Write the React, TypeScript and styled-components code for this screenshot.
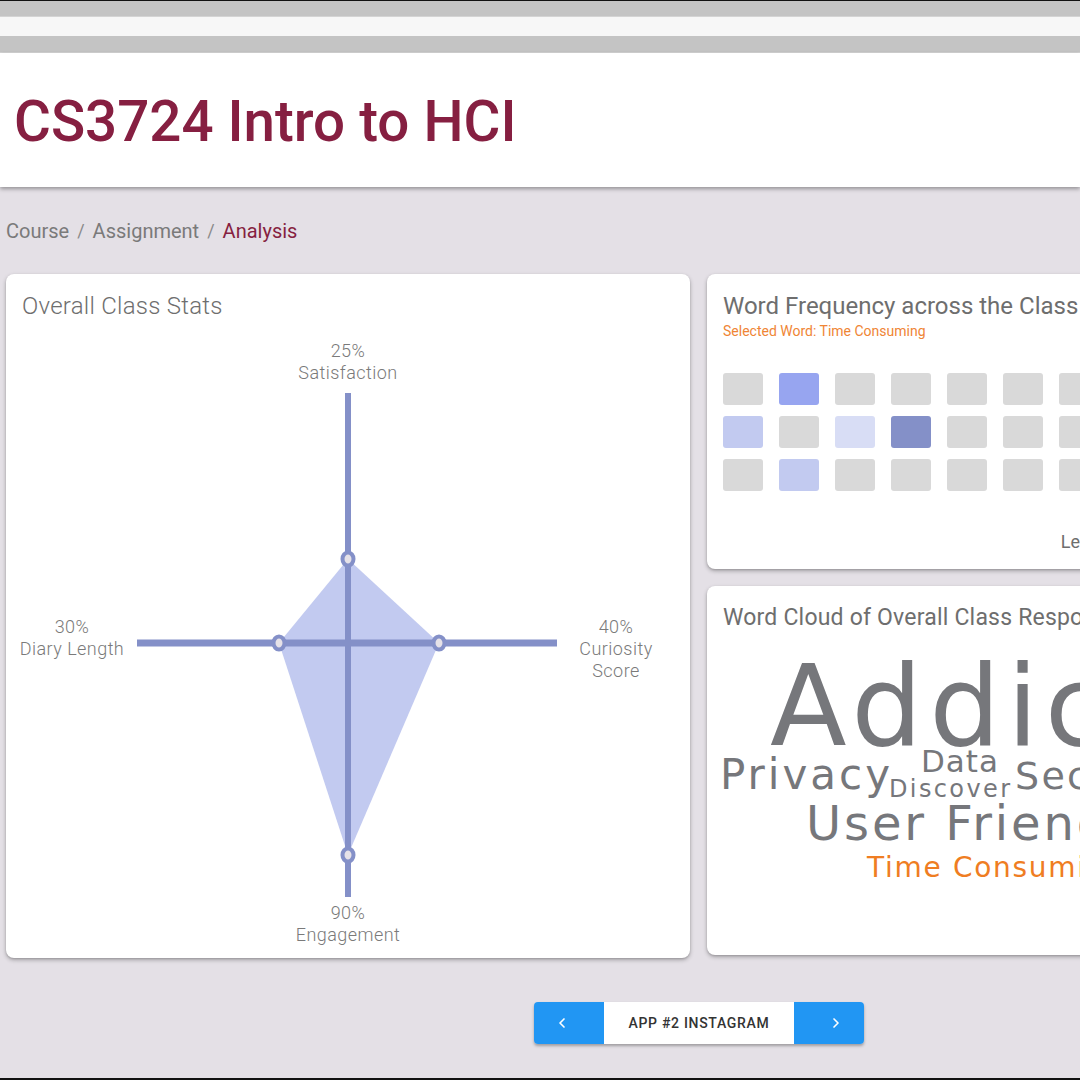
import React from "react";
import styled, { createGlobalStyle } from "styled-components";
import { ChevronLeft, ChevronRight } from "lucide-react";

const GlobalStyle = createGlobalStyle`
  html, body { margin: 0; padding: 0; overflow: hidden; background: #e4e0e6; }
  body { font-family: Roboto, "Liberation Sans", sans-serif; }
  * { box-sizing: border-box; }
`;

const Page = styled.div`
  width: 100vw;
  height: 1080px;
  overflow: hidden;
  background: #e4e0e6;
  border-top: 1px solid #111;
  border-bottom: 2px solid #111;
  display: flex;
  flex-direction: column;
`;

const ChromeBar = styled.div<{ $light?: boolean; $h: number }>`
  flex: none;
  height: ${(p) => p.$h}px;
  background: ${(p) => (p.$light ? "#f7f7f7" : "#c4c4c4")};
  border-bottom: ${(p) => (p.$light ? "none" : "1px solid #d4d4d4")};
`;

const Header = styled.header`
  flex: none;
  height: 134px;
  background: #fff;
  padding: 41px 14px 0;
  box-shadow: 0 2px 4px rgba(0, 0, 0, 0.35);
  position: relative;
  z-index: 1;
`;

const Title = styled.h1`
  margin: 0;
  font-family: Roboto, sans-serif;
  font-weight: 500;
  font-size: 56.5px;
  line-height: 56px;
  color: #861f41;
  white-space: nowrap;
`;

const Main = styled.main`
  width: 1398px;
  padding: 0 6px;
  flex: none;
`;

const Crumbs = styled.nav`
  display: flex;
  align-items: center;
  margin-top: 32px;
  height: 24px;
  font-size: 20px;
  line-height: 24px;
  color: #7a7a7a;
`;

const Crumb = styled.span<{ $active?: boolean }>`
  color: ${(p) => (p.$active ? "#861f41" : "#7a7a7a")};
`;

const Sep = styled.span`
  margin: 0 8px;
  color: #8a8a8a;
  font-size: 18px;
`;

const Grid = styled.div`
  display: grid;
  grid-template-columns: 684px 685px;
  column-gap: 17px;
  margin-top: 31px;
`;

const Card = styled.section<{ $h: number }>`
  background: #fff;
  border-radius: 8px;
  height: ${(p) => p.$h}px;
  box-shadow: 0 2px 4px rgba(0, 0, 0, 0.28), 0 1px 2px rgba(0, 0, 0, 0.12);
  overflow: hidden;
  display: flex;
  flex-direction: column;
`;

const Column = styled.div`
  display: flex;
  flex-direction: column;
  gap: 17px;
`;

const CardHead = styled.div<{ $top?: number }>`
  padding: ${(p) => p.$top ?? 16}px 16px 0;
`;

const CardTitle = styled.h2<{ $size?: number; $weight?: number; $ls?: number }>`
  margin: 0;
  font-family: Roboto, sans-serif;
  font-weight: ${(p) => p.$weight ?? 400};
  font-size: ${(p) => p.$size ?? 24}px;
  line-height: ${(p) => (p.$size ? p.$size + 8 : 32)}px;
  letter-spacing: ${(p) => p.$ls ?? 0}px;
  color: #6e6e6e;
  white-space: nowrap;
`;

const Selected = styled.div`
  font-size: 14px;
  line-height: 18px;
  color: #ef8535;
  white-space: nowrap;
`;

const Heat = styled.div`
  display: grid;
  grid-template-columns: repeat(12, 40px);
  grid-auto-rows: 32px;
  column-gap: 16px;
  row-gap: 11px;
  padding: 33px 16px 0;
`;

const Cell = styled.div<{ $c: string }>`
  background: ${(p) => p.$c};
  border-radius: 3px;
`;

const Legend = styled.div`
  display: flex;
  align-items: center;
  justify-content: flex-end;
  gap: 10px;
  padding: 0 16px;
  margin-top: 38px;
  height: 24px;
  font-size: 18px;
  color: #6e6e6e;
`;

const Swatches = styled.div`
  display: flex;
  gap: 4px;
`;

const Swatch = styled.div<{ $c: string }>`
  width: 40px;
  height: 20px;
  border-radius: 3px;
  background: ${(p) => p.$c};
`;

const ChartSvg = styled.svg`
  display: block;
  flex: none;
`;

const ChartSvgWrap = styled.div`
  margin-top: -3px;
`;

const PagerRow = styled.div`
  display: flex;
  justify-content: center;
  margin-top: 44px;
`;

const Pager = styled.div`
  display: flex;
  height: 42px;
  border-radius: 4px;
  overflow: hidden;
  box-shadow: 0 2px 3px rgba(0, 0, 0, 0.3);
`;

const NavBtn = styled.button<{ $side: "left" | "right" }>`
  width: 70px;
  border: none;
  background: #2196f3;
  color: #fff;
  display: flex;
  align-items: center;
  justify-content: center;
  padding: ${(p) => (p.$side === "left" ? "0 14px 0 0" : "0 0 0 14px")};
  cursor: pointer;
`;

const Label = styled.div`
  width: 190px;
  background: #fff;
  display: flex;
  align-items: center;
  justify-content: center;
  font-family: Roboto, sans-serif;
  font-weight: 500;
  font-size: 14px;
  letter-spacing: 0.7px;
  color: #333;
  text-transform: uppercase;
`;

const G = "#d9d9d9";
const heat: string[][] = [
  [G, "#97a5f0", G, G, G, G, G, G, G, G, G, G],
  ["#c2caf0", G, "#d8ddf5", "#8490c8", G, G, G, G, G, G, G, G],
  [G, "#c2caf0", G, G, G, G, G, G, G, G, G, G],
];

const AX = "#8490c8";
const LBL = {
  fill: "#7a7a7a",
  fontSize: 18,
  fontWeight: 300,
  fontFamily: "Roboto, sans-serif",
  letterSpacing: "0.45px",
} as const;

function Radar() {
  const cx = 342;
  const cy = 321;
  const pts = [
    [342, 237],
    [433, 321],
    [342, 533],
    [273, 321],
  ];
  return (
    <ChartSvg width={684} height={636} viewBox="0 0 684 636">
      <polygon points={pts.map((p) => p.join(",")).join(" ")} fill="#c2caf0" />
      <line x1={cx} y1={71} x2={cx} y2={575} stroke={AX} strokeWidth={6} />
      <line x1={131} y1={cy} x2={551} y2={cy} stroke={AX} strokeWidth={7} />
      {pts.map(([x, y], i) => (
        <ellipse key={i} cx={x} cy={y} rx={5.5} ry={6.5} fill="#e6e2e8" stroke={AX} strokeWidth={4} />
      ))}
      <g textAnchor="middle" {...LBL}>
        <text x={342} y={35}>25%</text>
        <text x={342} y={57}>Satisfaction</text>
        <text x={66} y={311}>30%</text>
        <text x={66} y={333}>Diary Length</text>
        <text x={610} y={311}>40%</text>
        <text x={610} y={333}>Curiosity</text>
        <text x={610} y={355}>Score</text>
        <text x={342} y={597}>90%</text>
        <text x={342} y={619}>Engagement</text>
      </g>
    </ChartSvg>
  );
}

const words = [
  { t: "Addictive", x: 63, y: 115, s: 112 },
  { t: "Privacy", x: 13, y: 159, s: 42, w: 170 },
  { t: "Data", x: 214, y: 142, s: 31, w: 77 },
  { t: "Discover", x: 182, y: 167, s: 24, w: 121 },
  { t: "Security", x: 308, y: 159, s: 38 },
  { t: "User Friendly", x: 99, y: 210, s: 48 },
  { t: "Time Consuming", x: 160, y: 247, s: 28, c: "#ef7d22" },
];

function Cloud() {
  return (
    <ChartSvg width={685} height={325} viewBox="0 0 685 325">
      <g fontFamily='"DejaVu Sans", "Open Sans", sans-serif' fill="#76777b">
        {words.map((w) => (
          <text
            key={w.t}
            x={w.x}
            y={w.y}
            fontSize={w.s}
            fill={w.c ?? "#76777b"}
            letterSpacing={w.w ? undefined : `${(w.s * 0.06).toFixed(1)}px`}
            {...(w.w ? { textLength: w.w, lengthAdjust: "spacing" } : {})}
          >
            {w.t}
          </text>
        ))}
      </g>
    </ChartSvg>
  );
}

export default function App() {
  return (
    <Page>
      <GlobalStyle />
      <ChromeBar $h={16} />
      <ChromeBar $h={19} $light />
      <ChromeBar $h={17} />
      <Header>
        <Title>CS3724 Intro to HCI</Title>
      </Header>
      <Main>
        <Crumbs>
          <Crumb>Course</Crumb>
          <Sep>/</Sep>
          <Crumb>Assignment</Crumb>
          <Sep>/</Sep>
          <Crumb $active>Analysis</Crumb>
        </Crumbs>
        <Grid>
          <Card $h={684}>
            <CardHead>
              <CardTitle $weight={300} $ls={0.25}>Overall Class Stats</CardTitle>
            </CardHead>
            <Radar />
          </Card>
          <Column>
            <Card $h={295}>
              <CardHead>
                <CardTitle>Word Frequency across the Class</CardTitle>
                <Selected>Selected Word: Time Consuming</Selected>
              </CardHead>
              <Heat>
                {heat.flatMap((row, r) => row.map((c, i) => <Cell key={`${r}-${i}`} $c={c} />))}
              </Heat>
              <Legend>
                <span>Less</span>
                <Swatches>
                  {["#d8ddf5", "#c2caf0", "#97a5f0", "#8490c8", "#6b78b8"].map((c) => (
                    <Swatch key={c} $c={c} />
                  ))}
                </Swatches>
                <span>More</span>
              </Legend>
            </Card>
            <Card $h={369}>
              <CardHead $top={16}>
                <CardTitle $size={23} $ls={0.2}>Word Cloud of Overall Class Responses</CardTitle>
              </CardHead>
              <ChartSvgWrap>
                <Cloud />
              </ChartSvgWrap>
            </Card>
          </Column>
        </Grid>
        <PagerRow>
          <Pager>
            <NavBtn $side="left" aria-label="previous">
              <ChevronLeft size={16} strokeWidth={2.5} />
            </NavBtn>
            <Label>App #2 Instagram</Label>
            <NavBtn $side="right" aria-label="next">
              <ChevronRight size={16} strokeWidth={2.5} />
            </NavBtn>
          </Pager>
        </PagerRow>
      </Main>
    </Page>
  );
}
